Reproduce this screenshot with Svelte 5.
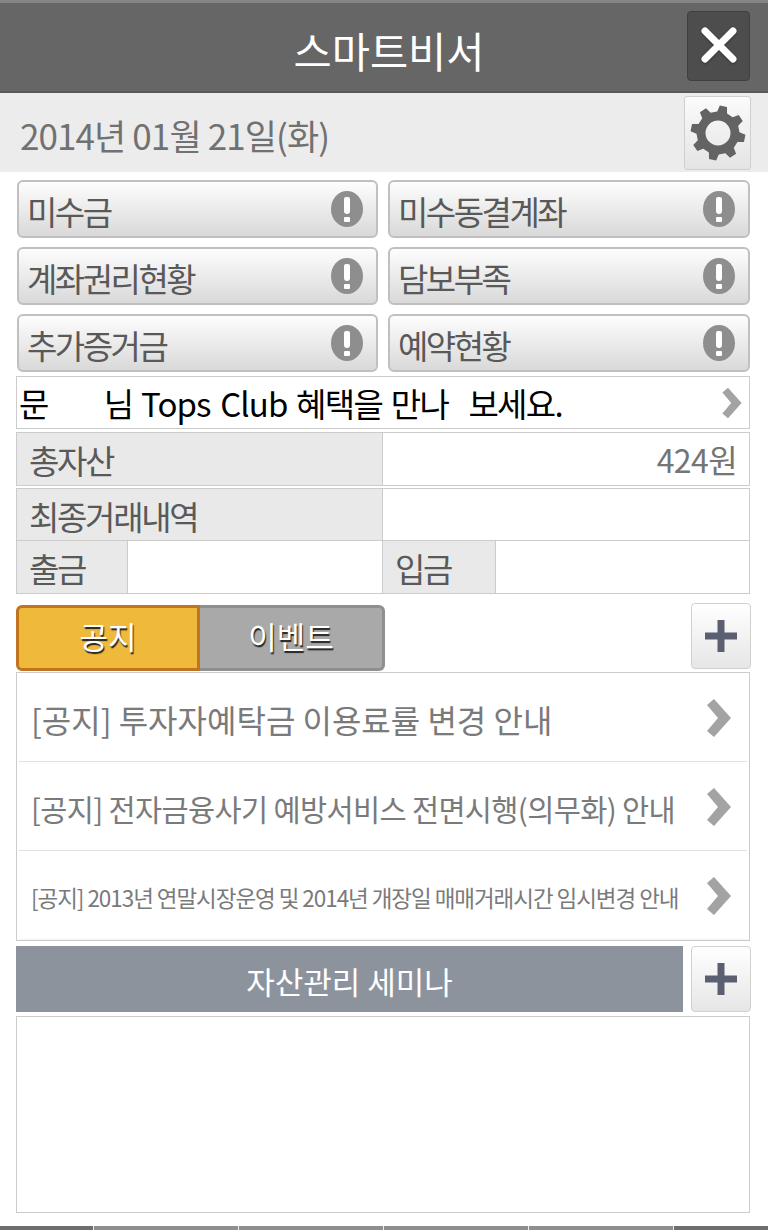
<script lang="ts">
  const alerts = ["미수금", "미수동결계좌", "계좌권리현황", "담보부족", "추가증거금", "예약현황"];
  const notices = [
    { text: "[공지] 투자자예탁금 이용료률 변경 안내", size: "lg" },
    { text: "[공지] 전자금융사기 예방서비스 전면시행(의무화) 안내", size: "md" },
    { text: "[공지] 2013년 연말시장운영 및 2014년 개장일 매매거래시간 임시변경 안내", size: "sm" }
  ];
  const tabs = [0, 1, 2, 3, 4, 5];

  // eight-toothed gear, outer/inner radius around the centre of a 58 box
  function gearPath(teeth: number, outer: number, inner: number, hole: number) {
    const c = 29;
    const step = (Math.PI * 2) / teeth;
    const pt = (r: number, a: number) =>
      `${(c + r * Math.cos(a)).toFixed(2)} ${(c + r * Math.sin(a)).toFixed(2)}`;
    let d = "";
    for (let i = 0; i < teeth; i++) {
      const a = i * step + 0.2;
      d += `${i ? "L" : "M"}${pt(inner, a - step * 0.3)}L${pt(outer, a - step * 0.17)}L${pt(outer, a + step * 0.17)}L${pt(inner, a + step * 0.3)}`;
    }
    d += `ZM${c - hole} ${c}a${hole} ${hole} 0 1 0 ${hole * 2} 0a${hole} ${hole} 0 1 0 ${-hole * 2} 0Z`;
    return d;
  }
  const gear = gearPath(8, 27.5, 21.5, 12.5);
</script>

{#snippet plus()}
  <button class="plus" aria-label="더보기">
    <svg width="34" height="34" viewBox="0 0 34 34"><path d="M13.500 1h7v12.500H33v7H20.500V33h-7V20.500H1v-7h12.500z" fill="#5a6072" /></svg>
  </button>
{/snippet}

{#snippet chevron(cls: string)}
  <svg class={cls} viewBox="0 0 26 40"><path d="M1 7l7-6 17 19L8 39l-7-6 11-13z" fill="#a3a3a3" /></svg>
{/snippet}

<div class="page">
  <header class="top">
    <h1>스마트비서</h1>
    <button class="close" aria-label="닫기">
      <svg width="36" height="36" viewBox="0 0 36 36"><path d="M4 4l28 28M32 4L4 32" stroke="#fff" stroke-width="7" stroke-linecap="round" /></svg>
    </button>
  </header>

  <div class="datebar">
    <span class="date">2014년 01월 21일(화)</span>
    <button class="gear" aria-label="설정">
      <svg width="58" height="58" viewBox="0 0 58 58"><path fill="#636363" fill-rule="evenodd" d={gear} /></svg>
    </button>
  </div>

  <main class="content">
    <div class="alerts">
      {#each alerts as label (label)}
        <button class="alert">
          <span>{label}</span>
          <span class="bang"><i></i><b></b></span>
        </button>
      {/each}
    </div>

    <div class="banner">
      <span>문<span class="gap-a">　　</span>님 <span class="latin">Tops Club</span> 혜택을 만나<span class="gap-b">　</span>보세요.</span>
      {@render chevron("chev-sm")}
    </div>

    <div class="table total">
      <div class="th wide">총자산</div>
      <div class="td amount">424원</div>
    </div>

    <div class="table history">
      <div class="th span2">최종거래내역</div>
      <div class="td span2"></div>
      <div class="th">출금</div>
      <div class="td"></div>
      <div class="th">입금</div>
      <div class="td"></div>
    </div>

    <div class="tabrow">
      <div class="tabs">
        <button class="tab on">공지</button>
        <button class="tab">이벤트</button>
      </div>
      {@render plus()}
    </div>

    <ul class="notices">
      {#each notices as n (n.text)}
        <li class={n.size}>
          <span>{n.text}</span>
          {@render chevron("chev")}
        </li>
      {/each}
    </ul>

    <div class="seminar-row">
      <div class="seminar">자산관리 세미나</div>
      {@render plus()}
    </div>

    <div class="seminar-box"></div>
  </main>

  <footer class="bottom">
    {#each tabs as t (t)}<span></span>{/each}
  </footer>
</div>

<style>
  :global(body) {
    margin: 0;
    background: #fff;
  }
  .page {
    width: 768px;
    height: 1230px;
    display: flex;
    flex-direction: column;
    overflow: hidden;
    font-family: "Noto Sans CJK KR", "Noto Sans", sans-serif;
    color: #555;
  }
  button {
    font-family: inherit;
    padding: 0;
    margin: 0;
    cursor: pointer;
  }
  .top {
    height: 90px;
    flex: none;
    border-top: 3px solid #858585;
    background: #666;
    display: flex;
    align-items: center;
    justify-content: center;
    position: relative;
    box-shadow: inset 0 -2px 0 #585858;
  }
  h1 {
    margin: 0 0 0 10px;
    font-size: 41.500px;
    font-weight: 400;
    color: #fff;
    line-height: 1;
    padding-top: 5px;
  }
  .close {
    position: absolute;
    left: 687px;
    top: 8px;
    width: 63px;
    height: 70px;
    box-sizing: border-box;
    background: #4d4d4d;
    border: 1px solid #3f3f3f;
    border-radius: 4px;
    display: flex;
    align-items: center;
    justify-content: center;
  }
  .close svg {
    filter: drop-shadow(0 1px 1px #333);
    margin-top: -2px;
  }
  .datebar {
    height: 79px;
    flex: none;
    background: #ececec;
    display: flex;
    align-items: center;
    justify-content: space-between;
    padding: 0 17px 0 20px;
    box-sizing: border-box;
  }
  .date {
    font-size: 35px;
    color: #717171;
    letter-spacing: -0.9px;
    padding-top: 4px;
  }
  .gear {
    width: 67px;
    height: 74px;
    box-sizing: border-box;
    margin-top: 1px;
    border: 1px solid #cfcfcf;
    border-radius: 3px;
    background: linear-gradient(#fbfbfb, #e4e4e4);
    display: flex;
    align-items: center;
    justify-content: center;
  }
  .content {
    flex: 1;
    padding: 8px 18px 0 16px;
    display: flex;
    flex-direction: column;
  }
  .alerts {
    display: grid;
    grid-template-columns: 361px 362px;
    column-gap: 10px;
    row-gap: 9px;
    margin-left: 1px;
  }
  .alert {
    height: 58px;
    box-sizing: border-box;
    border: 2px solid #c0c0c0;
    border-radius: 6px;
    background: linear-gradient(#fdfdfd, #d9d9d9);
    display: flex;
    align-items: center;
    justify-content: space-between;
    padding: 0 13px 0 8px;
    font-size: 33px;
    color: #595959;
    letter-spacing: -2.5px;
  }
  .alert span:first-child {
    padding-top: 3px;
  }
  .bang {
    width: 32px;
    height: 36px;
    flex: none;
    border-radius: 50%;
    background: #8e8e8e;
    display: flex;
    flex-direction: column;
    align-items: center;
    justify-content: center;
    gap: 3px;
  }
  .bang i {
    display: block;
    width: 6px;
    height: 17px;
    background: #fff;
    border-radius: 2px 2px 3px 3px;
  }
  .bang b {
    display: block;
    width: 6px;
    height: 5px;
    background: #fff;
    border-radius: 1px;
  }
  .banner {
    height: 53px;
    box-sizing: border-box;
    margin-top: 4px;
    border: 1px solid #ccc;
    display: flex;
    align-items: center;
    justify-content: space-between;
    padding: 0 5px 0 2px;
    font-size: 33px;
    color: #000;
    letter-spacing: -1.7px;
    word-spacing: 3px;
    white-space: nowrap;
  }
  .gap-a {
    letter-spacing: -5px;
  }
  .gap-b {
    letter-spacing: -12.700px;
  }
  .latin {
    letter-spacing: -0.9px;
  }
  .chev-sm {
    flex: none;
    width: 24px;
    height: 32px;
  }
  .table {
    display: grid;
    box-sizing: border-box;
    border: 1px solid #ccc;
    font-size: 33px;
    color: #595959;
    letter-spacing: -2.300px;
  }
  .total {
    margin-top: 3px;
    height: 54px;
    grid-template-columns: 366px 1fr;
  }
  .history {
    margin-top: 2px;
    height: 106px;
    grid-template-columns: 111px 255px 113px 1fr;
    grid-template-rows: 52px 1fr;
  }
  .th {
    background: #e9e9e9;
    display: flex;
    align-items: center;
    padding: 3px 0 0 12px;
    border-right: 1px solid #ccc;
    line-height: 1;
  }
  .td {
    display: flex;
    align-items: center;
    justify-content: flex-end;
    background: #fff;
  }
  .span2 {
    grid-column: span 2;
    border-bottom: 1px solid #ccc;
  }
  .history .td:nth-child(4) {
    border-right: 1px solid #ccc;
  }
  .amount {
    color: #757575;
    padding-right: 12px;
    font-size: 32px;
    letter-spacing: -0.6px;
  }
  .tabrow {
    height: 66px;
    margin-top: 9px;
    display: flex;
    align-items: flex-start;
    justify-content: space-between;
    margin-right: -1px;
  }
  .tabs {
    display: flex;
    width: 369px;
    height: 66px;
    margin-top: 2px;
  }
  .tab {
    flex: 1;
    box-sizing: border-box;
    border: 3px solid #8f8f8f;
    border-left: 0;
    border-radius: 0 6px 6px 0;
    background: #a9a9a9;
    color: #fff;
    font-size: 31px;
    padding-bottom: 5px;
    text-shadow: 1px 2px 1px #222;
  }
  .tab.on {
    flex: none;
    width: 184px;
    border: 3px solid #c0741f;
    border-radius: 6px 0 0 6px;
    background: #efb93c;
  }
  .plus {
    width: 60px;
    height: 66px;
    flex: none;
    box-sizing: border-box;
    border: 1px solid #d0d0d0;
    border-radius: 4px;
    background: linear-gradient(#fff, #e6e6e6);
    display: flex;
    align-items: center;
    justify-content: center;
  }
  .notices {
    list-style: none;
    margin: 3px 0 0;
    padding: 0 2px;
    height: 269px;
    box-sizing: border-box;
    border: 1px solid #ccc;
    display: flex;
    flex-direction: column;
  }
  .notices li {
    flex: 1;
    display: flex;
    align-items: center;
    justify-content: space-between;
    border-bottom: 1px solid #e2e2e2;
    padding: 0 15px 0 12px;
    color: #7a7a7a;
    white-space: nowrap;
  }
  .notices li:last-child {
    border-bottom-color: #f3f3f3;
  }
  .notices li span {
    padding-top: 4px;
  }
  .notices .lg {
    font-size: 32px;
    letter-spacing: 0;
  }
  .notices .md {
    font-size: 29.500px;
    letter-spacing: -0.65px;
  }
  .notices .sm {
    font-size: 22.500px;
    letter-spacing: -1.05px;
  }
  .chev {
    flex: none;
    width: 26px;
    height: 40px;
    margin-top: 2px;
  }
  .seminar-row {
    height: 66px;
    margin-top: 5px;
    margin-right: -1px;
    display: flex;
    justify-content: space-between;
  }
  .seminar {
    width: 667px;
    background: #8c939d;
    color: #fff;
    font-size: 31px;
    display: flex;
    align-items: center;
    justify-content: center;
    box-sizing: border-box;
    padding-top: 2px;
  }
  .seminar-box {
    height: 197px;
    margin-top: 4px;
    box-sizing: border-box;
    border: 1px solid #ccc;
  }
  .bottom {
    height: 4px;
    flex: none;
    background: #7a7a7a;
    display: grid;
    grid-template-columns: 93px repeat(4, 145px) 1fr;
  }
  .bottom span {
    border-left: 1px solid #eee;
    background: #8e8e8e;
  }
  .bottom span:first-child {
    border-left: 0;
    background: #6e6e6e;
  }
  .bottom span:last-child {
    background: #6e6e6e;
  }
</style>
